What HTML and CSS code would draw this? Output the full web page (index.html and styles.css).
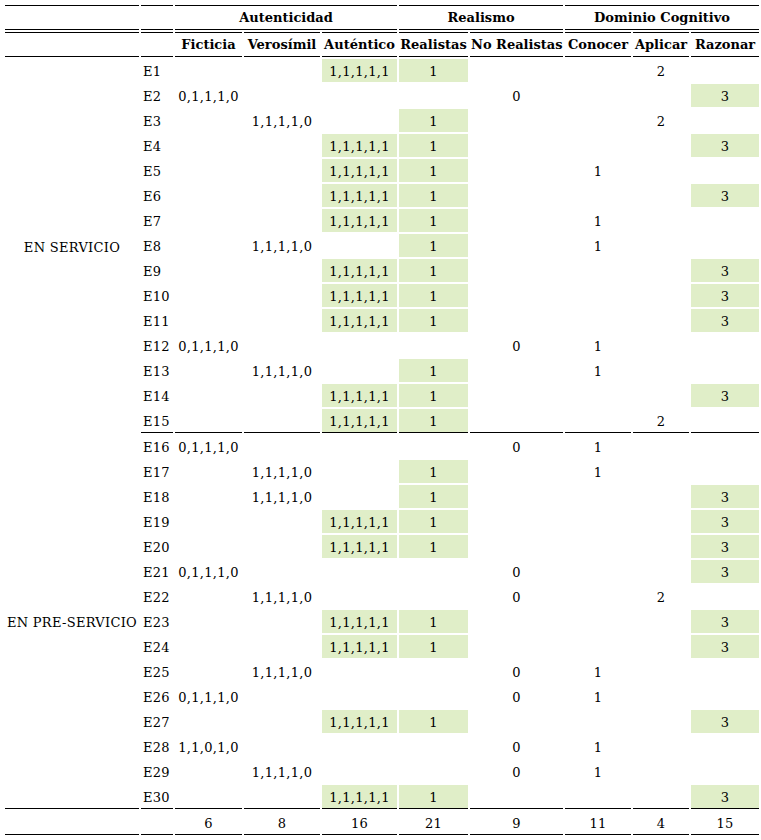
FILE: index.html
```html
<!DOCTYPE html>
<html lang="es">
<head>
<meta charset="utf-8">
<title>Tabla</title>
<link rel="stylesheet" href="styles.css">
</head>
<body>
<table class="grid">
  <colgroup>
    <col class="c-grp"><col class="c-id"><col class="c-fic"><col class="c-ver"><col class="c-aut">
    <col class="c-rea"><col class="c-nor"><col class="c-con"><col class="c-apl"><col class="c-raz">
  </colgroup>
  <thead>
    <tr class="hrow">
      <th></th><th></th>
      <th colspan="3">Autenticidad</th>
      <th colspan="2">Realismo</th>
      <th colspan="3">Dominio Cognitivo</th>
    </tr>
    <tr class="hrow">
      <th></th><th></th>
      <th>Ficticia</th><th>Verosímil</th><th>Auténtico</th>
      <th>Realistas</th><th>No Realistas</th>
      <th>Conocer</th><th>Aplicar</th><th>Razonar</th>
    </tr>
  </thead>
  <tbody>
    <tr><td class="grp" rowspan="15">EN SERVICIO</td><td class="id">E1</td><td></td><td></td><td class="g">1,1,1,1,1</td><td class="g">1</td><td></td><td></td><td>2</td><td></td></tr>
    <tr><td class="id">E2</td><td>0,1,1,1,0</td><td></td><td></td><td></td><td>0</td><td></td><td></td><td class="g">3</td></tr>
    <tr><td class="id">E3</td><td></td><td>1,1,1,1,0</td><td></td><td class="g">1</td><td></td><td></td><td>2</td><td></td></tr>
    <tr><td class="id">E4</td><td></td><td></td><td class="g">1,1,1,1,1</td><td class="g">1</td><td></td><td></td><td></td><td class="g">3</td></tr>
    <tr><td class="id">E5</td><td></td><td></td><td class="g">1,1,1,1,1</td><td class="g">1</td><td></td><td>1</td><td></td><td></td></tr>
    <tr><td class="id">E6</td><td></td><td></td><td class="g">1,1,1,1,1</td><td class="g">1</td><td></td><td></td><td></td><td class="g">3</td></tr>
    <tr><td class="id">E7</td><td></td><td></td><td class="g">1,1,1,1,1</td><td class="g">1</td><td></td><td>1</td><td></td><td></td></tr>
    <tr><td class="id">E8</td><td></td><td>1,1,1,1,0</td><td></td><td class="g">1</td><td></td><td>1</td><td></td><td></td></tr>
    <tr><td class="id">E9</td><td></td><td></td><td class="g">1,1,1,1,1</td><td class="g">1</td><td></td><td></td><td></td><td class="g">3</td></tr>
    <tr><td class="id">E10</td><td></td><td></td><td class="g">1,1,1,1,1</td><td class="g">1</td><td></td><td></td><td></td><td class="g">3</td></tr>
    <tr><td class="id">E11</td><td></td><td></td><td class="g">1,1,1,1,1</td><td class="g">1</td><td></td><td></td><td></td><td class="g">3</td></tr>
    <tr><td class="id">E12</td><td>0,1,1,1,0</td><td></td><td></td><td></td><td>0</td><td>1</td><td></td><td></td></tr>
    <tr><td class="id">E13</td><td></td><td>1,1,1,1,0</td><td></td><td class="g">1</td><td></td><td>1</td><td></td><td></td></tr>
    <tr><td class="id">E14</td><td></td><td></td><td class="g">1,1,1,1,1</td><td class="g">1</td><td></td><td></td><td></td><td class="g">3</td></tr>
    <tr class="last"><td class="id">E15</td><td></td><td></td><td class="g">1,1,1,1,1</td><td class="g">1</td><td></td><td></td><td>2</td><td></td></tr>

    <tr><td class="grp grp-end" rowspan="15">EN PRE-SERVICIO</td><td class="id">E16</td><td>0,1,1,1,0</td><td></td><td></td><td></td><td>0</td><td>1</td><td></td><td></td></tr>
    <tr><td class="id">E17</td><td></td><td>1,1,1,1,0</td><td></td><td class="g">1</td><td></td><td>1</td><td></td><td></td></tr>
    <tr><td class="id">E18</td><td></td><td>1,1,1,1,0</td><td></td><td class="g">1</td><td></td><td></td><td></td><td class="g">3</td></tr>
    <tr><td class="id">E19</td><td></td><td></td><td class="g">1,1,1,1,1</td><td class="g">1</td><td></td><td></td><td></td><td class="g">3</td></tr>
    <tr><td class="id">E20</td><td></td><td></td><td class="g">1,1,1,1,1</td><td class="g">1</td><td></td><td></td><td></td><td class="g">3</td></tr>
    <tr><td class="id">E21</td><td>0,1,1,1,0</td><td></td><td></td><td></td><td>0</td><td></td><td></td><td class="g">3</td></tr>
    <tr><td class="id">E22</td><td></td><td>1,1,1,1,0</td><td></td><td></td><td>0</td><td></td><td>2</td><td></td></tr>
    <tr><td class="id">E23</td><td></td><td></td><td class="g">1,1,1,1,1</td><td class="g">1</td><td></td><td></td><td></td><td class="g">3</td></tr>
    <tr><td class="id">E24</td><td></td><td></td><td class="g">1,1,1,1,1</td><td class="g">1</td><td></td><td></td><td></td><td class="g">3</td></tr>
    <tr><td class="id">E25</td><td></td><td>1,1,1,1,0</td><td></td><td></td><td>0</td><td>1</td><td></td><td></td></tr>
    <tr><td class="id">E26</td><td>0,1,1,1,0</td><td></td><td></td><td></td><td>0</td><td>1</td><td></td><td></td></tr>
    <tr><td class="id">E27</td><td></td><td></td><td class="g">1,1,1,1,1</td><td class="g">1</td><td></td><td></td><td></td><td class="g">3</td></tr>
    <tr><td class="id">E28</td><td>1,1,0,1,0</td><td></td><td></td><td></td><td>0</td><td>1</td><td></td><td></td></tr>
    <tr><td class="id">E29</td><td></td><td>1,1,1,1,0</td><td></td><td></td><td>0</td><td>1</td><td></td><td></td></tr>
    <tr class="last"><td class="id">E30</td><td></td><td></td><td class="g">1,1,1,1,1</td><td class="g">1</td><td></td><td></td><td></td><td class="g">3</td></tr>
  </tbody>
  <tfoot>
    <tr class="total"><td></td><td></td><td>6</td><td>8</td><td>16</td><td>21</td><td>9</td><td>11</td><td>4</td><td>15</td></tr>
  </tfoot>
</table>
</body>
</html>
```

FILE: styles.css
```css
html, body {
  margin: 0;
  padding: 0;
  background: #ffffff;
}
body {
  padding: 3px;
  font-family: "DejaVu Serif", serif;
  font-size: 13px;
  color: #000000;
}
.grid {
  table-layout: fixed;
  border-collapse: separate;
  border-spacing: 2px;
  width: 758px;
}
.c-grp { width: 134px; }
.c-id { width: 32px; }
.c-fic { width: 67px; }
.c-ver { width: 76px; }
.c-aut { width: 75px; }
.c-rea { width: 69px; }
.c-nor { width: 93px; }
.c-con { width: 66px; }
.c-apl { width: 56px; }
.c-raz { width: 68px; }

.grid th,
.grid td {
  padding: 0 1px;
  text-align: center;
  vertical-align: middle;
  white-space: nowrap;
  line-height: 15px;
  overflow: hidden;
}
.grid td {
  padding-top: 2px;
  letter-spacing: 0.3px;
}
.hrow { height: 25px; }
.hrow th {
  font-weight: bold;
  border-top: 1px solid #000;
  border-bottom: 1px solid #000;
}
tbody tr { height: 23px; }
tbody tr.last { height: 24px; }
tbody tr.last td { border-bottom: 1px solid #000; }
.grid td.id { text-align: left; padding-left: 2px; }
.grid td.grp { padding-left: 0; padding-right: 0; }
.grid td.grp-end { border-bottom: 1px solid #000; }
.grid td.g { background: #e0eec8; }
.total { height: 24px; }
.total td { border-bottom: 1px solid #000; }
```
